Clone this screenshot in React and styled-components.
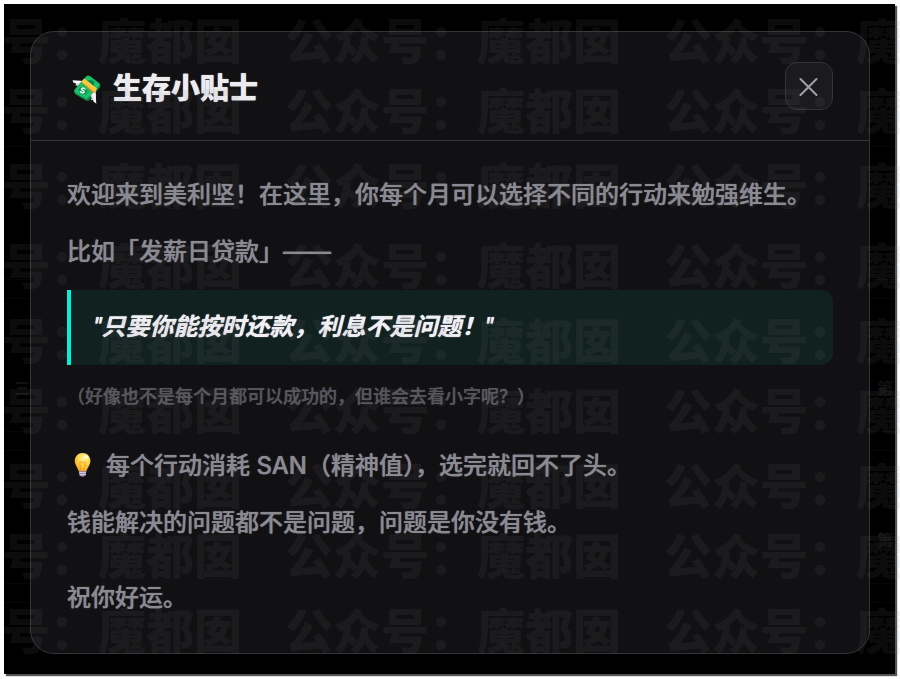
import React from "react";
import styled, { createGlobalStyle } from "styled-components";

const rows = [1, 2, 3, 4, 5, 6, 7, 8, 9];
const stamps = [1, 2, 3];

const months = [
  { id: 1, label: "", tail: "" },
  { id: 2, label: "三", tail: "第" },
  { id: 3, label: "", tail: "第" },
  { id: 4, label: "", tail: "" }
];

const MoneyIcon = () => (
  <Emoji viewBox="0 0 30 30" role="img" aria-label="money">
    <path d="M0.5 6.5 L11 7 L8 12.4 L5 14.4 L6 11.8 L3.4 11.6 L4.2 9.6 L1.6 9 Z" fill="#d9d5d9" />
    <path d="M0.5 6.5 L11 7 L5 10 Z" fill="#fbfafb" />
    <path d="M3 17.6 L14.5 3.4 Q16 2 18 3 L27.5 10.4 Q29 12 28 13.6 L17 26.4 Q15.4 27.6 13.8 26.6 L3.6 20.6 Q2.2 19.4 3 17.6 Z" fill="#0b7a45" />
    <path d="M2.4 15.8 L14.2 2.2 Q16 0.8 18 2 L27.4 9.2 Q28.6 10.6 27.4 12.2 L16 24.6 Q14.6 25.8 13 24.8 L3 19 Q1.4 17.6 2.4 15.8 Z" fill="#17b863" />
    <path d="M4.8 16.6 L15.6 4.2 L25.4 11.2 L14.6 22.8 Z" fill="none" stroke="#42d184" strokeWidth="0.8" />
    <path d="M16 6.6 Q19.6 4.8 22 8.2 Q22.8 10.4 20.8 12 Z" fill="#088347" />
    <path d="M9.6 8.6 L11.4 6.2 L24 17 L22 19.6 Z" fill="#e8981c" />
    <path d="M9.4 7.6 L12.2 4.6 L25 14.6 L23.2 18.2 Z" fill="#ffc83d" />
    <ellipse cx="10.8" cy="16.6" rx="4.4" ry="3.4" transform="rotate(25 10.8 16.6)" fill="#0a9650" />
    <path d="M13 15 Q10.8 13.2 9.6 14.8 Q9.2 15.8 11 16.6 Q13 17.8 11.6 18.6 Q10 19.2 8.4 17.6" fill="none" stroke="#e6f5ea" strokeWidth="1.5" strokeLinecap="round" />
    <path d="M18.4 21.6 Q20.4 18.2 23.6 18.2 L24.2 29.4 L21.4 27.8 L21 26 L18.8 26.2 L19.6 24 Z" fill="#d5d0d5" />
    <path d="M19.8 20.6 Q21.6 18.4 23.6 18.2 L24.2 29.4 L22.6 27.6 Z" fill="#f6f4f6" />
  </Emoji>
);

const BulbIcon = () => (
  <Emoji viewBox="0 0 30 30" role="img" aria-label="tip">
    <defs>
      <radialGradient id="glass" cx="0.6" cy="0.28" r="0.75">
        <stop offset="0" stopColor="#fff6a8" />
        <stop offset="0.45" stopColor="#ffd84f" />
        <stop offset="1" stopColor="#f6a21f" />
      </radialGradient>
    </defs>
    <path d="M15.6 3 C20.2 3 23.4 6.4 23.4 10.8 C23.4 15 20.8 17 19.4 21.4 L11.8 21.4 C10.4 17 7.8 15 7.8 10.8 C7.8 6.4 11 3 15.6 3 Z" fill="url(#glass)" />
    <path d="M14 21 L12.8 13.2 Q12.6 11.4 14.2 11.8 L15.6 13.4 L17 11.8 Q18.6 11.4 18.4 13.2 L17.2 21" fill="none" stroke="#f09a22" strokeWidth="0.9" />
    <ellipse cx="19.4" cy="6.8" rx="2.2" ry="1.4" transform="rotate(38 19.4 6.8)" fill="#fffbe0" />
    <path d="M12 21.2 H19.2 L18.9 25 Q18 26.8 15.6 26.8 Q13.2 26.8 12.3 25 Z" fill="#9c8bb0" />
    <path d="M12.2 22.4 H19 M12.6 24.6 H18.6" stroke="#d8cfe4" strokeWidth="1" />
  </Emoji>
);

const Backdrop = () => (
  <MonthList aria-hidden="true">
    {months.map(month => (
      <MonthRow key={month.id}>
        <span>{month.label}</span>
        <span>{month.tail}</span>
      </MonthRow>
    ))}
  </MonthList>
);

const Watermark = () => (
  <WatermarkLayer aria-hidden="true">
    {rows.map(row => (
      <WatermarkRow key={row}>
        {stamps.map(stamp => (
          <span key={stamp}>公众号：魔都囡</span>
        ))}
      </WatermarkRow>
    ))}
  </WatermarkLayer>
);

const App = () => {
  return (
    <React.Fragment>
      <GlobalStyle />
      <Page>
        <Stage>
          <Backdrop />
          <Dialog role="dialog" aria-labelledby="tips-title">
            <Header>
              <Title id="tips-title">
                <MoneyIcon />
                生存小贴士
              </Title>
              <CloseButton type="button" aria-label="关闭">
                <svg width="20" height="20" viewBox="0 0 20 20" fill="none">
                  <path
                    d="M1.5 3 L17.5 19 M17.5 3 L1.5 19"
                    stroke="currentColor"
                    strokeWidth="2"
                    strokeLinecap="round"
                  />
                </svg>
              </CloseButton>
            </Header>
            <Body>
              <Text>欢迎来到美利坚！在这里，你每个月可以选择不同的行动来勉强维生。</Text>
              <Text>比如「发薪日贷款」——</Text>
              <Quote>"只要你能按时还款，利息不是问题！"</Quote>
              <SmallPrint>（好像也不是每个月都可以成功的，但谁会去看小字呢？）</SmallPrint>
              <Text $section>
                <BulbIcon />
                每个行动消耗 SAN（精神值），选完就回不了头。
              </Text>
              <Text>钱能解决的问题都不是问题，问题是你没有钱。</Text>
              <Text $section>祝你好运。</Text>
            </Body>
          </Dialog>
        </Stage>
        <Watermark />
      </Page>
    </React.Fragment>
  );
};

export default App;

const GlobalStyle = createGlobalStyle`
  * {
    box-sizing: border-box;
  }
  body {
    margin: 0;
    background: #fff;
    font-family: Inter, "Noto Sans CJK SC", sans-serif;
  }
`;

const Page = styled.main`
  position: relative;
  min-height: 100vh;
  padding: 4px;
  display: flex;
  overflow: hidden;
`;

const Stage = styled.div`
  position: relative;
  flex: 1;
  margin: 0 1px 1px 0;
  padding: 27px 25px 20px 26px;
  background: #000;
  box-shadow: 2px 2px 1px #555;
`;

const MonthList = styled.div`
  position: absolute;
  inset: 0;
  padding-top: 142px;
  display: flex;
  flex-direction: column;
  gap: 18px;
  overflow: hidden;
`;

const MonthRow = styled.div`
  flex: 0 0 134px;
  padding: 44px 2px 0 10px;
  display: flex;
  align-items: center;
  justify-content: space-between;
  border-top: 1px solid #070708;
  border-bottom: 1px solid #070708;
  color: #111112;
  font-size: 16px;
  font-weight: 700;
`;

const Dialog = styled.section`
  position: relative;
  background: #111113;
  border: 1px solid #333338;
  border-radius: 24px;
`;

const Header = styled.header`
  display: flex;
  align-items: center;
  justify-content: space-between;
  padding: 30px 36px;
  border-bottom: 1px solid #333338;
`;

const Title = styled.h2`
  margin: 0;
  padding: 6px 0 0 5px;
  display: flex;
  align-items: center;
  gap: 11px;
  color: #ececf0;
  font-size: 29px;
  font-weight: 800;
  line-height: 42px;
  text-shadow: 0 0 1px #ececf0;
`;

const CloseButton = styled.button`
  width: 48px;
  height: 48px;
  padding: 0;
  display: grid;
  place-items: center;
  background: #1a1a1f;
  border: 1px solid #333338;
  border-radius: 12px;
  color: #a0a0a8;
  cursor: pointer;
`;

const Body = styled.div`
  display: flex;
  flex-direction: column;
  gap: 20px;
  padding: 35px 36px 37px;
`;

const Text = styled.p`
  margin: ${props => (props.$section ? "18px 0 0" : "0")};
  color: #8a8a92;
  font-size: 24px;
  font-weight: 500;
  line-height: 37px;
  text-shadow: 0 0 1px #8a8a92;

  svg {
    margin-right: 9px;
    vertical-align: -6px;
  }
`;

const Quote = styled.blockquote`
  margin: 0;
  padding: 19px 23px;
  background: #112120;
  border-left: 4px solid #00f0d8;
  border-radius: 0 12px 12px 0;
  color: #f0f0f4;
  font-family: Roboto, "Noto Sans CJK SC", sans-serif;
  font-size: 24px;
  font-style: italic;
  font-weight: 700;
  line-height: 37px;
  text-shadow: 0 0 1px #f0f0f4;
`;

const SmallPrint = styled.p`
  margin: 0;
  color: #55555b;
  font-size: 18px;
  font-weight: 500;
  line-height: 24px;
  text-shadow: 0 0 1px #55555b;
`;

const Emoji = styled.svg`
  width: 30px;
  height: 30px;
  flex: none;
`;

const WatermarkLayer = styled.div`
  position: absolute;
  inset: 0 0 0 -94px;
  padding-top: 7px;
  display: grid;
  grid-template-rows: 70px 75px 80px 75px 70px 75px 70px 75px 75px;
  overflow: hidden;
  pointer-events: none;
  color: rgba(128, 128, 128, 0.11);
  font-size: 48px;
  font-weight: 800;
  line-height: 70px;
  white-space: nowrap;
`;

const WatermarkRow = styled.div`
  display: flex;
  gap: 43px;
`;
